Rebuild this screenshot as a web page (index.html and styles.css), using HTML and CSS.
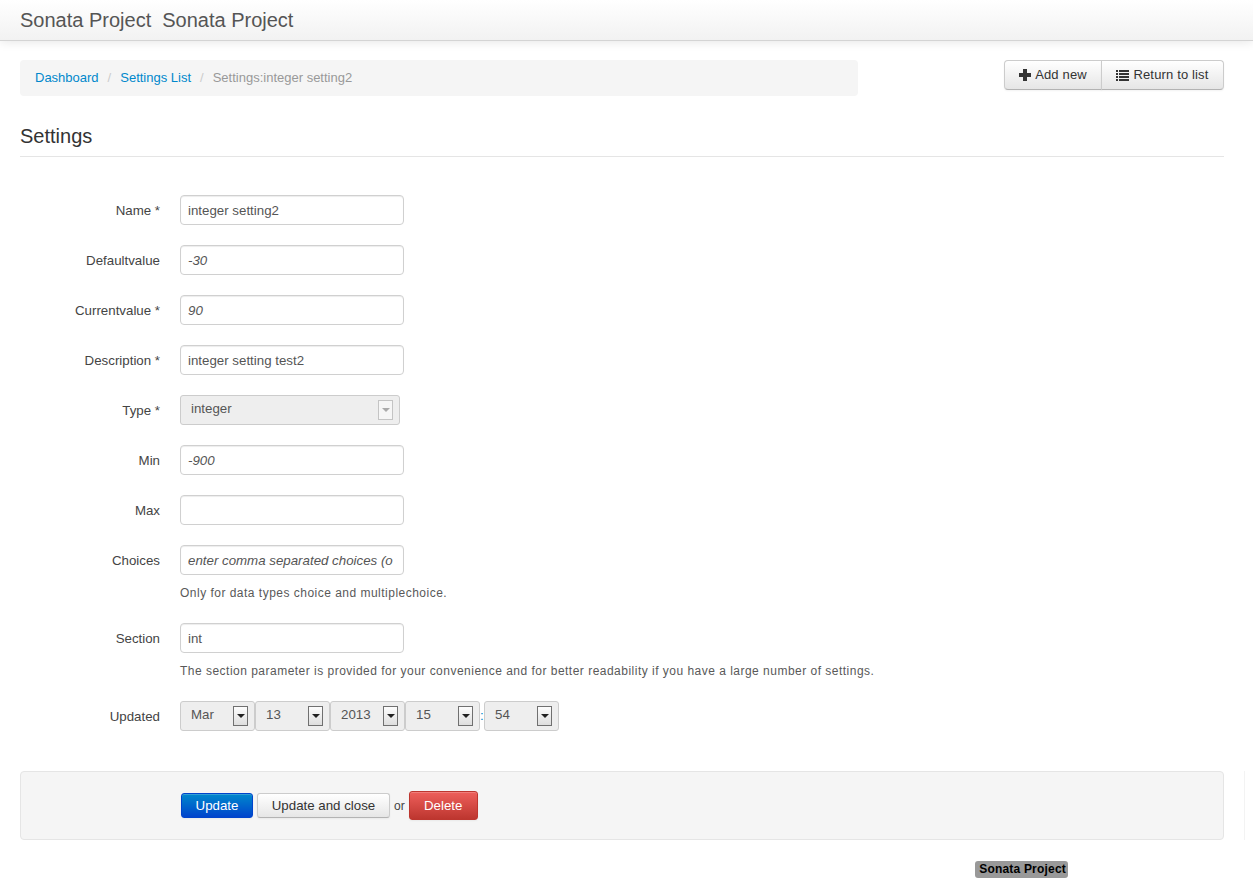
FILE: index.html
```html
<!DOCTYPE html>
<html lang="en">
<head>
    <meta charset="UTF-8">
    <title>Settings:integer setting2</title>
    <link rel="stylesheet" href="styles.css">
</head>
<body>

    <!-- Top bar -->
    <div class="navbar">
        <a class="brand" href="#">Sonata Project</a>
        <a class="brand brand-second" href="#">Sonata Project</a>
    </div>

    <div class="page">
        <div class="top-row">
            <ul class="breadcrumb">
                <li><a href="#">Dashboard</a><span class="divider">/</span></li>
                <li><a href="#">Settings List</a><span class="divider">/</span></li>
                <li class="active">Settings:integer setting2</li>
            </ul>
            <div class="btn-group">
                <a class="btn" href="#">
                    <svg class="icon" width="12" height="12" viewBox="0 0 12 12"><path d="M4 0h4v4h4v4H8v4H4V8H0V4h4z" fill="#333"/></svg>
                    Add new
                </a>
                <a class="btn" href="#">
                    <svg class="icon" width="13" height="12" viewBox="0 0 13 12"><path d="M0 1h2v2H0zM3 1h10v2H3zM0 4h2v2H0zM3 4h10v2H3zM0 7h2v2H0zM3 7h10v2H3zM0 10h2v2H0zM3 10h10v2H3z" fill="#333"/></svg>
                    Return to list
                </a>
            </div>
        </div>

        <h2 class="page-title">Settings</h2>

        <form class="form">
            <div class="row">
                <label class="row-label" for="name">Name *</label>
                <div><input class="text" id="name" type="text" value="integer setting2"></div>
            </div>
            <div class="row">
                <label class="row-label" for="defaultvalue">Defaultvalue</label>
                <div><input class="text text-em" id="defaultvalue" type="text" value="-30"></div>
            </div>
            <div class="row">
                <label class="row-label" for="currentvalue">Currentvalue *</label>
                <div><input class="text text-em" id="currentvalue" type="text" value="90"></div>
            </div>
            <div class="row">
                <label class="row-label" for="description">Description *</label>
                <div><input class="text" id="description" type="text" value="integer setting test2"></div>
            </div>
            <div class="row">
                <span class="row-label">Type *</span>
                <div class="fake-select fake-select-wide">
                    <span class="fake-value">integer</span>
                    <span class="arrow arrow-off"></span>
                </div>
            </div>
            <div class="row">
                <label class="row-label" for="min">Min</label>
                <div><input class="text text-em" id="min" type="text" value="-900"></div>
            </div>
            <div class="row">
                <label class="row-label" for="max">Max</label>
                <div><input class="text" id="max" type="text"></div>
            </div>
            <div class="row">
                <label class="row-label" for="choices">Choices</label>
                <div>
                    <input class="text text-em" id="choices" type="text" value="enter comma separated choices (o">
                    <p class="help">Only for data types choice and multiplechoice.</p>
                </div>
            </div>
            <div class="row">
                <label class="row-label" for="section">Section</label>
                <div>
                    <input class="text" id="section" type="text" value="int">
                    <p class="help">The section parameter is provided for your convenience and for better readability if you have a large number of settings.</p>
                </div>
            </div>
            <div class="row">
                <span class="row-label">Updated</span>
                <div class="date-group">
                    <div class="fake-select"><span class="fake-value">Mar</span><span class="arrow"></span></div>
                    <div class="fake-select"><span class="fake-value">13</span><span class="arrow"></span></div>
                    <div class="fake-select"><span class="fake-value">2013</span><span class="arrow"></span></div>
                    <div class="fake-select"><span class="fake-value">15</span><span class="arrow"></span></div>
                    <span class="colon">:</span>
                    <div class="fake-select"><span class="fake-value">54</span><span class="arrow"></span></div>
                </div>
            </div>

            <!-- Form buttons -->
            <div class="form-actions">
                <a class="btn btn-primary" href="#">Update</a>
                <a class="btn btn-close" href="#">Update and close</a>
                <span class="or">or</span>
                <a class="btn btn-danger" href="#">Delete</a>
            </div>
        </form>

        <div class="footer">
            <span class="badge">Sonata Project</span>
        </div>
    </div>

</body>
</html>
```

FILE: styles.css
```css
/* Global */
body {
    font-family: "Liberation Sans", Arial, sans-serif;
    font-size: 13.3px;
    line-height: 20px;
    margin: 0;
    padding: 0;
    background-color: #fff;
    color: #444;
}

a {
    text-decoration: none;
}

/* Top bar */
.navbar {
    height: 40px;
    padding: 0 20px;
    display: flex;
    align-items: center;
    gap: 11px;
    background: linear-gradient(to bottom, #ffffff, #f2f2f2);
    border-bottom: 1px solid #d4d4d4;
    box-shadow: 0 1px 10px rgba(0, 0, 0, 0.1);
}

.brand {
    font-size: 20px;
    line-height: 40px;
    color: #555;
}

.brand-second {
    margin-top: -1px;
}

/* Page */
.page {
    padding: 19px 29px 0 20px;
}

.top-row {
    display: flex;
    justify-content: space-between;
    align-items: flex-start;
}

.breadcrumb {
    list-style: none;
    display: flex;
    width: 808px;
    height: 36px;
    margin: 0;
    padding: 0 15px;
    align-items: center;
    font-size: 13px;
    background-color: #f5f5f5;
    border-radius: 4px;
}

.breadcrumb a {
    color: #0088cc;
}

.breadcrumb .divider {
    padding: 0 9px;
    color: #ccc;
}

.breadcrumb .active {
    color: #999;
}

/* Buttons */
.btn {
    display: inline-flex;
    align-items: center;
    justify-content: center;
    box-sizing: border-box;
    height: 30px;
    padding: 0 14px;
    color: #333;
    background: linear-gradient(to bottom, #ffffff, #e6e6e6);
    border: 1px solid #ccc;
    border-bottom-color: #b3b3b3;
    border-radius: 4px;
    box-shadow: inset 0 1px 0 rgba(255, 255, 255, 0.2), 0 1px 2px rgba(0, 0, 0, 0.05);
}

.btn-group {
    display: flex;
}

.btn-group .btn {
    font-size: 13px;
    letter-spacing: 0.15px;
}

.btn-group .btn:first-child {
    width: 98px;
    border-radius: 4px 0 0 4px;
}

.btn-group .btn:last-child {
    width: 123px;
    border-radius: 0 4px 4px 0;
    margin-left: -1px;
}

.icon {
    flex: none;
    margin-right: 4px;
}

/* Title */
.page-title {
    margin: 25px 0 38px;
    padding-bottom: 5px;
    font-size: 20px;
    font-weight: normal;
    line-height: 30px;
    color: #333;
    border-bottom: 1px solid #e5e5e5;
}

/* Form rows */
.row {
    display: grid;
    grid-template-columns: 140px 1fr;
    column-gap: 20px;
    margin-bottom: 20px;
}

.row-label {
    height: 30px;
    text-align: right;
    line-height: 31px;
}

.text {
    display: block;
    box-sizing: border-box;
    width: 224px;
    height: 30px;
    margin: 0;
    padding: 4px 7px;
    font-family: inherit;
    font-size: 13.3px;
    color: #555;
    background-color: #fff;
    border: 1px solid #d0d0d0;
    border-radius: 4px;
    box-shadow: inset 0 1px 1px rgba(0, 0, 0, 0.075);
}

.text-em {
    font-style: italic;
}

.help {
    margin: 8px 0 0;
    font-size: 12px;
    line-height: 20px;
    letter-spacing: 0.485px;
    color: #595959;
}

/* Select boxes */
.fake-select {
    display: flex;
    align-items: center;
    justify-content: space-between;
    box-sizing: border-box;
    width: 75px;
    height: 30px;
    padding: 0 6px 0 10px;
    background-color: #eee;
    border: 1px solid #ccc;
    border-radius: 3px;
    color: #555;
}

.fake-select-wide {
    width: 220px;
}

.fake-value {
    margin-top: -2px;
}

.arrow {
    box-sizing: border-box;
    width: 15px;
    height: 20px;
    display: flex;
    align-items: center;
    justify-content: center;
    background: linear-gradient(to bottom, #fdfdfd, #dedede);
    border: 1px solid #707070;
}

.arrow::after {
    content: "";
    border-left: 4px solid transparent;
    border-right: 4px solid transparent;
    border-top: 4px solid #222;
}

.arrow-off {
    background: #f6f6f6;
    border-color: #c4c4c4;
}

.arrow-off::after {
    border-top-color: #aaa;
}

.date-group {
    display: flex;
}

.colon {
    width: 4px;
    line-height: 30px;
    color: #08c;
}

/* Bottom bar */
.form-actions {
    position: relative;
    display: flex;
    align-items: center;
    gap: 4px;
    box-sizing: border-box;
    height: 69px;
    margin-top: 40px;
    padding-left: 160px;
    background-color: #f5f5f5;
    border: 1px solid #e5e5e5;
    border-radius: 4px;
}

/* faint line to the right of the bar */
.form-actions::after {
    content: "";
    position: absolute;
    top: -1px;
    bottom: -1px;
    right: -22px;
    width: 1px;
    background-color: #f3f3f3;
}

.form-actions .btn {
    height: 25px;
    padding: 0;
    border-radius: 3px;
}

.form-actions .btn-primary {
    width: 72px;
    color: #fff;
    background: linear-gradient(to bottom, #0088cc, #0044cc);
    border-color: #0044cc;
}

.form-actions .btn-close {
    width: 133px;
}

.form-actions .btn-danger {
    width: 69px;
    height: 29px;
    color: #fff;
    background: linear-gradient(to bottom, #ee5f5b, #bd362f);
    border-color: #bd362f;
}

.or {
    font-size: 12px;
}

/* Footer */
.footer {
    display: flex;
    justify-content: flex-end;
    margin-top: 21px;
    padding-right: 156px;
}

.badge {
    padding: 0 2px 0 4px;
    font-size: 12px;
    line-height: 17px;
    font-weight: bold;
    letter-spacing: 0.2px;
    color: #000;
    background-color: #999;
    border-radius: 3px;
}
```
